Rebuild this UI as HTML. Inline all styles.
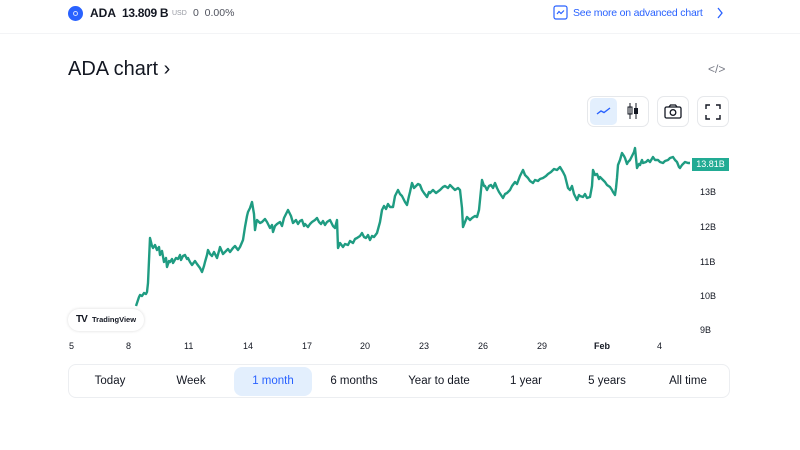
<!DOCTYPE html>
<html><head><meta charset="utf-8"><style>
*{margin:0;padding:0;box-sizing:border-box}
body{width:800px;height:450px;background:#fff;font-family:"Liberation Sans",sans-serif;color:#131722;position:relative;overflow:hidden}
.a{position:absolute}
.tab{position:absolute;top:367px;height:29px;width:78px;line-height:29px;text-align:center;font-size:11.5px;color:#131722;border-radius:8px}
.ax{position:absolute;font-size:9px;color:#131722}
.btn{position:absolute;top:96px;height:31px;border:1px solid #e6e8eb;border-radius:7px;background:#fff}
</style></head><body>
<div class="a" style="left:68px;top:6px;width:15px;height:15px;border-radius:50%;background:#2962ff"></div>
<div class="a" style="left:73px;top:11px;width:5px;height:5px;border-radius:50%;border:1px solid #cfdcff"></div>
<div class="a" style="left:90px;top:6px;font-size:12px;font-weight:bold">ADA</div>
<div class="a" style="left:122px;top:6px;font-size:12px;font-weight:bold;letter-spacing:-0.3px">13.809 B</div>
<div class="a" style="left:172px;top:10px;font-size:7px;color:#9598a1">USD</div>
<div class="a" style="left:193px;top:7px;font-size:10.5px;color:#50535e">0&nbsp; 0.00%</div>
<svg class="a" style="left:553px;top:5px" width="15" height="15" viewBox="0 0 15 15"><rect x="1" y="1" width="13" height="13" rx="2" fill="none" stroke="#2962ff" stroke-width="1.2"/><path d="M4 9 L6 6.5 L8 8.5 L11 5.5" fill="none" stroke="#2962ff" stroke-width="1.2"/></svg>
<div class="a" style="left:573px;top:7px;font-size:10.5px;color:#2962ff;letter-spacing:-0.2px">See more on advanced chart</div>
<svg class="a" style="left:716px;top:7px" width="8" height="12"><path d="M2 1 L6 6 L2 11" fill="none" stroke="#2962ff" stroke-width="1.3"/></svg>
<div class="a" style="left:0;top:33px;width:800px;height:1px;background:#f3f4f6"></div>
<div class="a" style="left:68px;top:58px;font-size:20px;color:#131722">ADA chart ›</div>
<div class="a" style="left:708px;top:62px;font-size:12px;color:#787b86">&lt;/&gt;</div>
<div class="btn" style="left:587px;width:62px"></div>
<div class="a" style="left:590px;top:98px;width:27px;height:27px;border-radius:5px;background:#e3effd"></div>
<svg class="a" style="left:596px;top:105px" width="16" height="12"><path d="M1 9 L5 6 L8 7.5 L14 3" fill="none" stroke="#2962ff" stroke-width="1.4"/></svg>
<svg class="a" style="left:625px;top:102px" width="16" height="18"><path d="M5 1v16M11 1v16" stroke="#131722" stroke-width="1"/><rect x="3" y="5" width="4" height="7" fill="none" stroke="#131722"/><rect x="9" y="6" width="4" height="6" fill="#131722"/></svg>
<div class="btn" style="left:657px;width:32px"></div>
<svg class="a" style="left:664px;top:104px" width="18" height="15"><rect x="1" y="3" width="16" height="11" rx="1.5" fill="none" stroke="#131722" stroke-width="1.3"/><path d="M5 3 L6.5 1 H11.5 L13 3" fill="none" stroke="#131722" stroke-width="1.3"/><circle cx="9" cy="8.5" r="2.8" fill="none" stroke="#131722" stroke-width="1.3"/></svg>
<div class="btn" style="left:697px;width:32px"></div>
<svg class="a" style="left:705px;top:104px" width="16" height="16"><path d="M1 5V1H5M11 1H15V5M15 11V15H11M5 15H1V11" fill="none" stroke="#131722" stroke-width="1.4"/></svg>
<svg class="a" style="left:0;top:0" width="800" height="450">
<polyline fill="none" stroke="#1f9c82" stroke-width="2.4" stroke-linejoin="round" points="136,306 137,303 139,297 140,295 142,296 144,293 146,294 147,292 148,283 150,238 152,246 153,248 155,245 157,250 159,247 160,255 162,251 164,262 166,258 167,267 169,261 170,262 172,259 173,263 176,258 178,259 180,255 181,260 183,256 185,255 187,259 188,258 190,262 192,265 195,261 197,264 200,268 202,272 204,266 205,262 207,255 208,250 210,254 212,256 214,252 217,258 219,251 220,247 223,254 225,252 228,249 230,252 233,248 235,246 238,250 240,247 243,240 245,227 247,216 248,212 250,208 252,202 254,214 255,230 256,224 257,220 260,223 262,222 265,219 267,222 269,226 270,228 272,225 273,232 275,226 277,224 280,222 282,226 284,218 286,214 288,210 290,214 291,216 293,223 296,220 298,224 300,221 302,220 304,226 305,224 308,227 310,224 312,222 315,220 317,218 319,222 321,224 323,221 325,225 327,222 330,220 333,226 335,228 337,220 338,248 340,243 343,247 345,244 348,245 350,241 353,243 355,239 357,238 360,236 362,233 364,237 366,238 368,235 370,240 372,236 374,237 377,233 380,222 382,210 384,206 386,209 388,204 390,207 393,207 395,196 398,190 400,194 402,196 405,202 407,205 409,196 410,192 412,183 414,188 416,186 418,184 420,185 422,190 424,193 427,197 429,192 430,193 433,190 436,193 440,190 443,187 445,186 448,188 450,185 452,187 455,190 458,188 460,190 462,208 463,227 465,222 467,217 470,220 472,218 475,216 477,217 479,210 480,200 482,180 484,186 485,186 487,190 489,186 491,185 493,188 495,183 497,188 499,192 501,195 503,198 505,194 507,193 510,190 512,186 515,182 517,184 520,176 523,170 525,175 528,178 530,181 533,183 535,180 538,181 540,179 543,178 546,176 548,174 551,172 554,169 557,170 560,167 563,172 565,176 567,184 568,188 570,190 572,186 574,194 576,198 577,200 579,195 580,196 583,197 585,194 587,198 590,197 592,186 593,170 595,175 597,174 599,179 600,177 603,180 605,182 607,185 610,187 612,190 613,192 615,195 616,188 617,178 618,165 620,160 622,153 624,156 625,158 627,164 628,162 630,160 632,156 634,152 635,148 636,158 637,168 639,164 640,165 642,160 643,163 646,162 648,160 650,162 653,157 655,160 658,160 660,162 663,163 665,161 668,160 670,158 673,157 675,160 677,162 679,167 680,168 682,165 683,164 685,162 688,163 690,163"/>
</svg>
<div class="a" style="left:692px;top:158px;width:37px;height:13px;background:#22ab94;color:#fff;font-size:9px;line-height:13px;text-align:center">13.81B</div>
<div class="ax" style="left:700px;top:187px">13B</div>
<div class="ax" style="left:700px;top:222px">12B</div>
<div class="ax" style="left:700px;top:257px">11B</div>
<div class="ax" style="left:700px;top:291px">10B</div>
<div class="ax" style="left:700px;top:325px">9B</div>
<div class="ax" style="left:69px;top:341px">5</div>
<div class="ax" style="left:126px;top:341px">8</div>
<div class="ax" style="left:184px;top:341px">11</div>
<div class="ax" style="left:243px;top:341px">14</div>
<div class="ax" style="left:302px;top:341px">17</div>
<div class="ax" style="left:360px;top:341px">20</div>
<div class="ax" style="left:419px;top:341px">23</div>
<div class="ax" style="left:478px;top:341px">26</div>
<div class="ax" style="left:537px;top:341px">29</div>
<div class="ax" style="left:594px;top:341px;font-weight:bold">Feb</div>
<div class="ax" style="left:657px;top:341px">4</div>
<div class="a" style="left:68px;top:309px;width:76px;height:22px;border-radius:11px;background:#fff;box-shadow:0 0 3px rgba(0,0,0,.15)"></div>
<div class="a" style="left:76px;top:314px;font-size:10px;font-weight:bold;letter-spacing:-1px">TV</div>
<div class="a" style="left:92px;top:315px;font-size:7.5px;font-weight:bold;color:#131722">TradingView</div>
<div class="a" style="left:68px;top:364px;width:662px;height:34px;border:1px solid #eceef1;border-radius:8px"></div>
<div class="tab" style="left:71px">Today</div>
<div class="tab" style="left:152px">Week</div>
<div class="tab" style="left:234px;background:#e3effd;color:#2962ff">1 month</div>
<div class="tab" style="left:315px">6 months</div>
<div class="tab" style="left:397px;width:84px">Year to date</div>
<div class="tab" style="left:487px">1 year</div>
<div class="tab" style="left:568px">5 years</div>
<div class="tab" style="left:649px">All time</div>
</body></html>
